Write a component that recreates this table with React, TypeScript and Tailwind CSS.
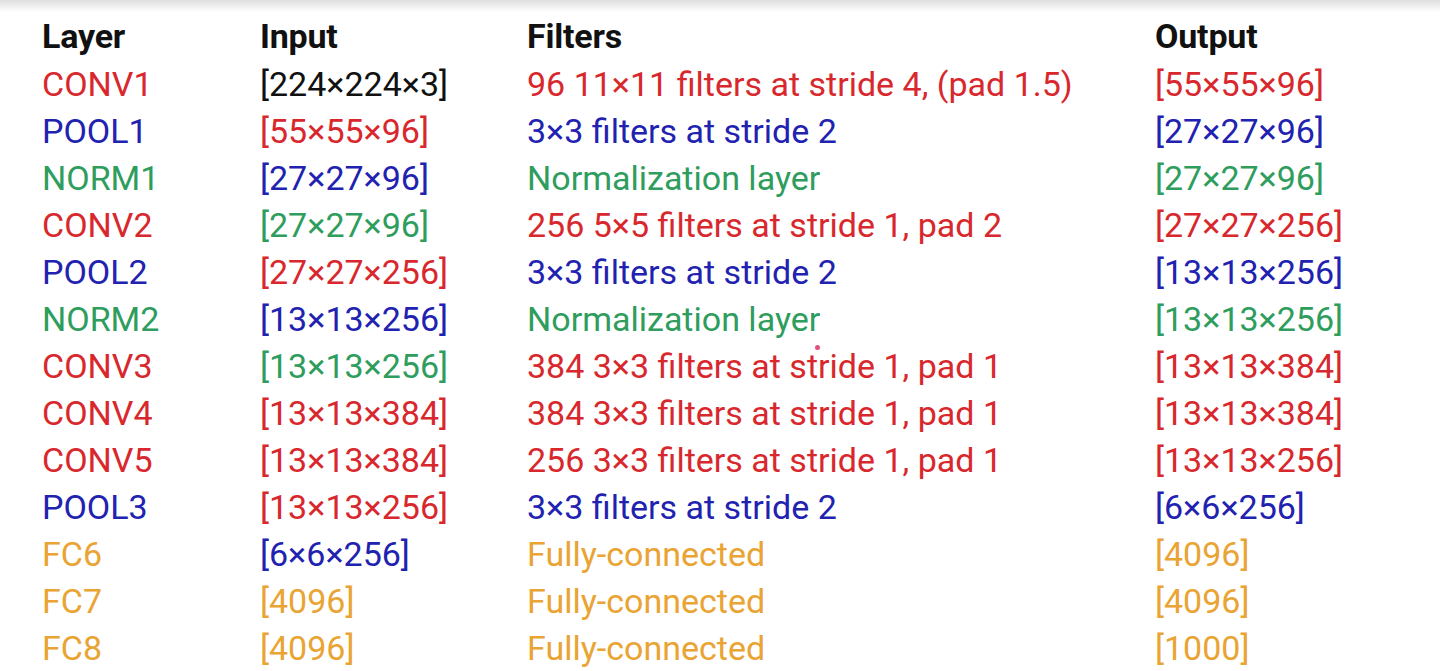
const R = 'text-[#d8282d]';
const B = 'text-[#2222b0]';
const G = 'text-[#2e9d5d]';
const O = 'text-[#e9a433]';
const K = 'text-[#111111]';

type Cell = [string, string];
type Row = [Cell, Cell, Cell, Cell];

const rows: Row[] = [
    [['CONV1', R], ['[224×224×3]', K], ['96 11×11 filters at stride 4, (pad 1.5)', R], ['[55×55×96]', R]],
    [['POOL1', B], ['[55×55×96]', R], ['3×3 filters at stride 2', B], ['[27×27×96]', B]],
    [['NORM1', G], ['[27×27×96]', B], ['Normalization layer', G], ['[27×27×96]', G]],
    [['CONV2', R], ['[27×27×96]', G], ['256 5×5 filters at stride 1, pad 2', R], ['[27×27×256]', R]],
    [['POOL2', B], ['[27×27×256]', R], ['3×3 filters at stride 2', B], ['[13×13×256]', B]],
    [['NORM2', G], ['[13×13×256]', B], ['Normalization layer', G], ['[13×13×256]', G]],
    [['CONV3', R], ['[13×13×256]', G], ['384 3×3 filters at stride 1, pad 1', R], ['[13×13×384]', R]],
    [['CONV4', R], ['[13×13×384]', R], ['384 3×3 filters at stride 1, pad 1', R], ['[13×13×384]', R]],
    [['CONV5', R], ['[13×13×384]', R], ['256 3×3 filters at stride 1, pad 1', R], ['[13×13×256]', R]],
    [['POOL3', B], ['[13×13×256]', R], ['3×3 filters at stride 2', B], ['[6×6×256]', B]],
    [['FC6', O], ['[6×6×256]', B], ['Fully-connected', O], ['[4096]', O]],
    [['FC7', O], ['[4096]', O], ['Fully-connected', O], ['[4096]', O]],
    [['FC8', O], ['[4096]', O], ['Fully-connected', O], ['[1000]', O]],
];

const headers = ['Layer', 'Input', 'Filters', 'Output'];

export default function App() {
    return (
        <div className="relative w-[1440px] h-[671px] overflow-hidden bg-white font-['Roboto',sans-serif]">
            <div className="h-[12px] bg-linear-to-b from-[#dedede] to-white" />
            <div className="pl-[42px] grid grid-cols-[218px_267px_628px_1fr] text-[34px] leading-[47px]">
                {headers.map((h) => (
                    <div key={h} className="font-bold text-[#111111] h-[49px] leading-[49px] tracking-[-0.2px]">
                        {h}
                    </div>
                ))}
                {rows.map((row, i) =>
                    row.map(([text, color], j) => (
                        <div key={`${i}-${j}`} className={`${color} h-[47px] whitespace-nowrap`}>
                            {text}
                        </div>
                    ))
                )}
            </div>
            {/* stray dot on the slide */}
            <span className="absolute left-[815px] top-[345px] w-[5px] h-[5px] rounded-full bg-[#e0507a]" />
        </div>
    );
}
